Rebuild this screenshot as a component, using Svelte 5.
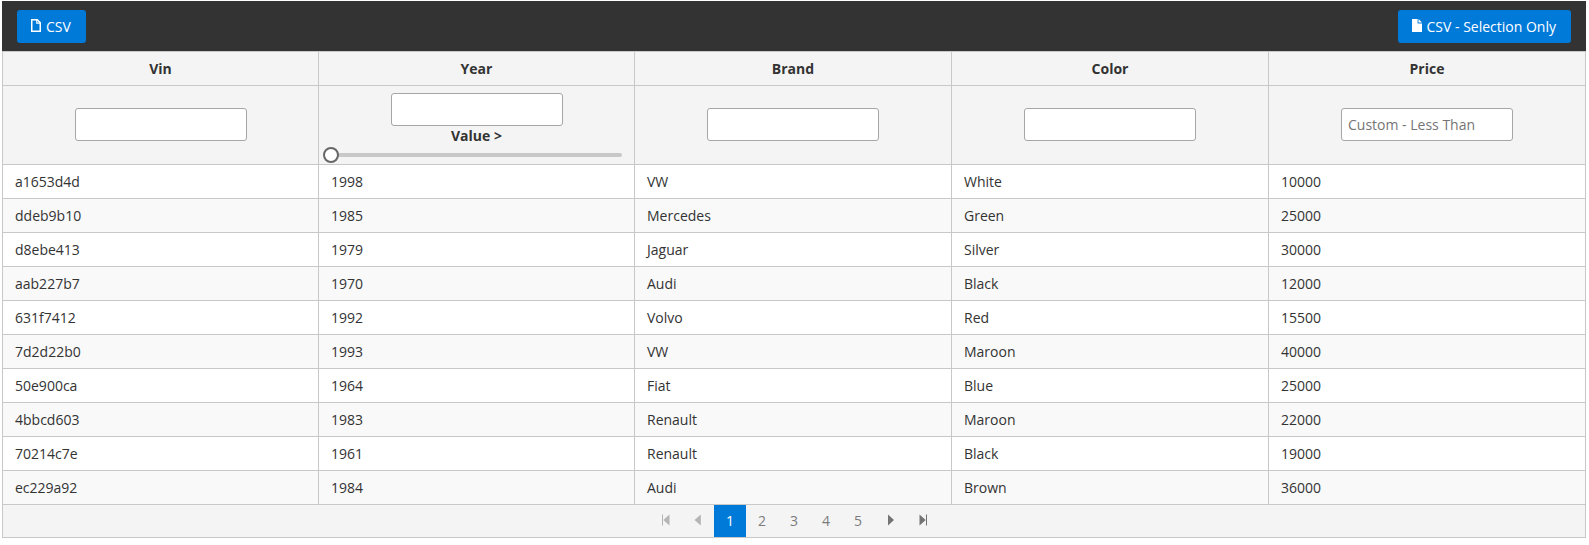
<script>
  const columns = [
    { name: 'Vin', placeholder: '' },
    { name: 'Year', placeholder: '', slider: true },
    { name: 'Brand', placeholder: '' },
    { name: 'Color', placeholder: '' },
    { name: 'Price', placeholder: 'Custom - Less Than' }
  ];
  const rows = [
    ['a1653d4d', 1998, 'VW', 'White', 10000],
    ['ddeb9b10', 1985, 'Mercedes', 'Green', 25000],
    ['d8ebe413', 1979, 'Jaguar', 'Silver', 30000],
    ['aab227b7', 1970, 'Audi', 'Black', 12000],
    ['631f7412', 1992, 'Volvo', 'Red', 15500],
    ['7d2d22b0', 1993, 'VW', 'Maroon', 40000],
    ['50e900ca', 1964, 'Fiat', 'Blue', 25000],
    ['4bbcd603', 1983, 'Renault', 'Maroon', 22000],
    ['70214c7e', 1961, 'Renault', 'Black', 19000],
    ['ec229a92', 1984, 'Audi', 'Brown', 36000]
  ];
  const pages = [1, 2, 3, 4, 5];
  let current = $state(1);
</script>

<div class="datatable">
  <header class="toolbar">
    <button class="btn">
      <svg width="10" height="13" viewBox="0 0 10 13"><path d="M.75.75H6.3L9.25 3.7v8.55H.75z" fill="none" stroke="#fff" stroke-width="1.5" /><path d="M5.8.5v3.7h3.7" fill="none" stroke="#fff" stroke-width="1.2" /></svg>
      <span>CSV</span>
    </button>
    <button class="btn">
      <svg width="10" height="13" viewBox="0 0 10 13"><path d="M0 0h5.6v4.4H10V13H0z" fill="#fff" /><path d="M6.5 0L10 3.5H6.5z" fill="#fff" /></svg>
      <span>CSV - Selection Only</span>
    </button>
  </header>

  <div class="grid titles">
    {#each columns as c}<div class="cell">{c.name}</div>{/each}
  </div>
  <div class="grid filters">
    {#each columns as c}
      <div class="cell">
        <input type="text" placeholder={c.placeholder} aria-label={c.name} />
        {#if c.slider}
          <div class="label">Value &gt;</div>
          <div class="slider"><span class="handle"></span></div>
        {/if}
      </div>
    {/each}
  </div>
  {#each rows as row}
    <div class="grid row">
      {#each row as value}<div class="cell">{value}</div>{/each}
    </div>
  {/each}

  <nav class="pager">
    <button class="page off" aria-label="First"><svg width="8" height="12" viewBox="0 0 8 12"><path d="M0 .5h1v11H0zM7.5 .5v11L1.3 6z" /></svg></button>
    <button class="page off" aria-label="Previous"><svg width="8" height="12" viewBox="0 0 8 12"><path d="M6.8 .5v11L.5 6z" /></svg></button>
    {#each pages as p}
      <button class="page" class:active={p === current} onclick={() => (current = p)}>{p}</button>
    {/each}
    <button class="page" aria-label="Next"><svg width="8" height="12" viewBox="0 0 8 12"><path d="M2 .5v11L8 6z" /></svg></button>
    <button class="page" aria-label="Last"><svg class="last" width="8" height="12" viewBox="0 0 8 12"><path d="M7 .5h1v11H7zM.5 .5v11L6.7 6z" /></svg></button>
  </nav>
</div>

<style>
  :global(body) {
    background: #fff;
  }
  .datatable {
    width: 1584px;
    padding: 1px 0 0 2px;
    font: 14px/19px 'Open Sans', sans-serif;
    color: #333;
  }
  .datatable * {
    box-sizing: border-box;
  }
  button {
    font: inherit;
    border: 0;
    margin: 0;
    cursor: pointer;
  }
  .toolbar {
    height: 50px;
    padding: 9px 15px 0;
    background: #333;
    display: flex;
    justify-content: space-between;
    align-items: flex-start;
  }
  .btn {
    height: 33px;
    padding: 0 15px 0 14px;
    display: flex;
    align-items: center;
    gap: 5px;
    color: #fff;
    background: #007ad9;
    border-radius: 3px;
  }
  .btn svg {
    margin-bottom: 2px;
  }
  .btn span {
    padding-bottom: 0;
  }
  .grid {
    display: grid;
    grid-template-columns: 316px 316px 317px 317px 318px;
  }
  .cell {
    border-top: 1px solid #c8c8c8;
    border-left: 1px solid #c8c8c8;
  }
  .cell:last-child {
    border-right: 1px solid #c8c8c8;
  }
  .titles .cell {
    height: 34px;
    padding-top: 7px;
    text-align: center;
    font-weight: 700;
    background: #f4f4f4;
  }
  .filters .cell {
    height: 79px;
    padding-top: 7px;
    display: flex;
    flex-direction: column;
    align-items: center;
    background: #f4f4f4;
  }
  .filters input:only-child {
    margin-top: 15px;
  }
  input {
    width: 172px;
    height: 33px;
    padding: 0 6px;
    font: inherit;
    color: #333;
    background: #fff;
    border: 1px solid #a6a6a6;
    border-radius: 3px;
  }
  input::placeholder {
    color: #757575;
    opacity: 1;
  }
  .label {
    font-weight: 700;
    height: 27px;
  }
  .slider {
    width: 291px;
    height: 4px;
    border-radius: 3px;
    background: #c8c8c8;
    position: relative;
  }
  .handle {
    position: absolute;
    left: -8px;
    top: -6px;
    width: 16px;
    height: 16px;
    border: 2px solid #666;
    border-radius: 50%;
    background: #fff;
  }
  .row .cell {
    height: 34px;
    padding: 7px 12px 0;
    background: #fff;
  }
  .row:nth-child(odd) .cell {
    background: #f9f9f9;
  }
  .pager {
    height: 34px;
    border: 1px solid #c8c8c8;
    background: #f4f4f4;
    display: flex;
    justify-content: center;
  }
  .page {
    width: 32px;
    height: 32px;
    padding: 0 0 2px;
    display: flex;
    align-items: center;
    justify-content: center;
    color: #7c7c7c;
    background: transparent;
  }
  .page svg {
    fill: #747474;
  }
  .page .last {
    margin-left: 2px;
  }
  .page.off svg {
    fill: #b5b5b5;
  }
  .page.active {
    color: #fff;
    background: #007ad9;
  }
</style>
